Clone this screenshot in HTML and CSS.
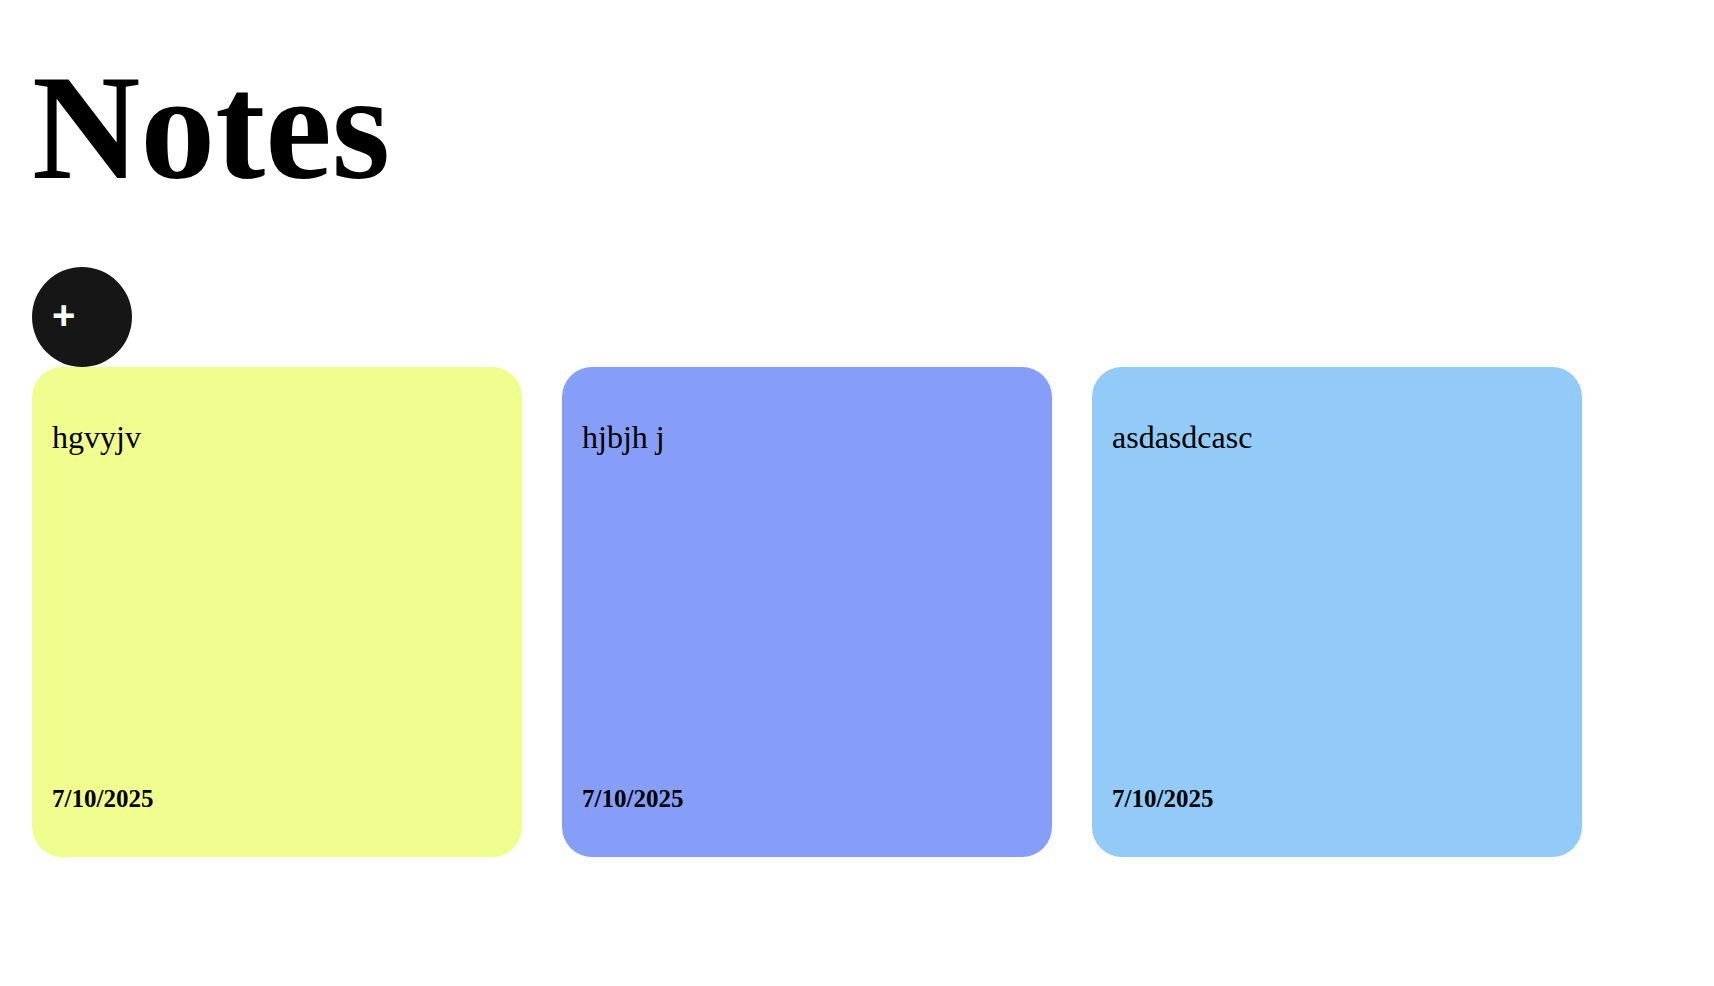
FILE: index.html
```html
<!DOCTYPE html>
<html lang="en">
<head>
<meta charset="utf-8">
<title>Notes</title>
<link rel="stylesheet" href="styles.css">
</head>
<body>
  <main class="app">
    <h1 class="title">Notes</h1>
    <button class="add-btn" type="button"><span class="add-icon">+</span></button>
    <section class="notes">
      <article class="note note-yellow">
        <p class="note-text">hgvyjv</p>
        <p class="note-date">7/10/2025</p>
      </article>
      <article class="note note-indigo">
        <p class="note-text">hjbjh j</p>
        <p class="note-date">7/10/2025</p>
      </article>
      <article class="note note-sky">
        <p class="note-text">asdasdcasc</p>
        <p class="note-date">7/10/2025</p>
      </article>
    </section>
  </main>
</body>
</html>
```

FILE: styles.css
```css
html, body {
  margin: 0;
  padding: 0;
  background: #ffffff;
}

body {
  font-family: "Liberation Serif", "Times New Roman", serif;
  color: #000;
}

.app {
  padding: 41px 32px 32px 32px;
  display: flex;
  flex-direction: column;
  align-items: flex-start;
}

.title {
  margin: 0 0 54px 0;
  font-size: 150px;
  font-weight: 700;
  line-height: normal;
}

.add-btn {
  width: 100px;
  height: 100px;
  border: none;
  border-radius: 50%;
  background: #161616;
  color: #ffffff;
  padding: 0 0 4px 20px;
  display: flex;
  align-items: center;
  justify-content: flex-start;
  cursor: pointer;
}

.add-icon {
  font-family: "Liberation Sans", Arial, sans-serif;
  font-weight: 700;
  font-size: 40px;
  line-height: 1;
}

.notes {
  display: flex;
  gap: 40px;
}

.note {
  width: 490px;
  height: 490px;
  box-sizing: border-box;
  border-radius: 30px;
  padding: 20px;
  display: flex;
  flex-direction: column;
  justify-content: space-between;
}

.note-yellow { background: #f0fe90; }
.note-indigo { background: #869ef8; }
.note-sky { background: #92cbf8; }

.note-text {
  margin: 32px 0 0 0;
  font-size: 32px;
}

.note-date {
  margin: 0 0 24px 0;
  font-size: 25px;
  font-weight: 700;
}
```
